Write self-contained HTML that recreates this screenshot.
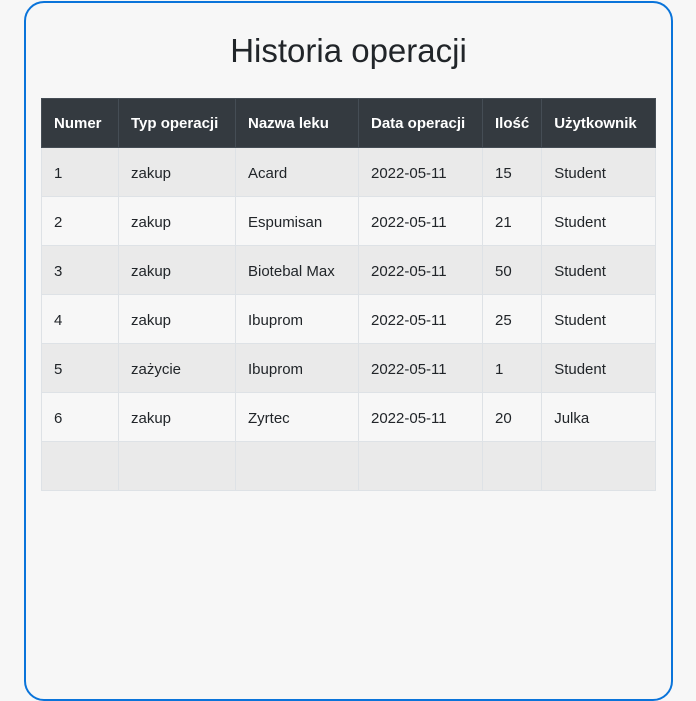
<!DOCTYPE html>
<html><head><meta charset="utf-8"><style>
*{box-sizing:border-box;margin:0;padding:0}
html,body{width:696px;height:451px;overflow:hidden;background:#f7f7f7;font-family:"Liberation Sans",sans-serif;color:#212529}
.card{position:absolute;left:24px;top:1px;width:649px;height:700px;border:2px solid #0a74da;border-radius:20px;background:#f7f7f7}
h1{position:absolute;left:0;width:100%;top:29px;text-align:center;font-size:33px;font-weight:normal;line-height:38px}
table{position:absolute;left:15px;top:95px;border-collapse:collapse;font-size:15px}
th,td{height:49px;padding:0 12px;text-align:left;border:1px solid #dee2e6;white-space:nowrap}
td{padding-top:3px}
th{background:#343a40;color:#fff;border-color:#454d55;font-weight:bold}
tr:nth-child(odd) td{background:#eaeaea}
tr:nth-child(even) td{background:#f7f7f7}
</style></head><body>
<div class="card"><h1>Historia operacji</h1>
<table>
<thead><tr><th style="width:77px">Numer</th><th style="width:117px">Typ operacji</th><th style="width:123px">Nazwa leku</th><th style="width:124px">Data operacji</th><th style="width:59px">Ilość</th><th style="width:114px">Użytkownik</th></tr></thead>
<tbody>
<tr><td>1</td><td>zakup</td><td>Acard</td><td>2022-05-11</td><td>15</td><td>Student</td></tr>
<tr><td>2</td><td>zakup</td><td>Espumisan</td><td>2022-05-11</td><td>21</td><td>Student</td></tr>
<tr><td>3</td><td>zakup</td><td>Biotebal Max</td><td>2022-05-11</td><td>50</td><td>Student</td></tr>
<tr><td>4</td><td>zakup</td><td>Ibuprom</td><td>2022-05-11</td><td>25</td><td>Student</td></tr>
<tr><td>5</td><td>zażycie</td><td>Ibuprom</td><td>2022-05-11</td><td>1</td><td>Student</td></tr>
<tr><td>6</td><td>zakup</td><td>Zyrtec</td><td>2022-05-11</td><td>20</td><td>Julka</td></tr>
<tr><td>&nbsp;</td><td></td><td></td><td></td><td></td><td></td></tr>
</tbody></table></div>
</body></html>
